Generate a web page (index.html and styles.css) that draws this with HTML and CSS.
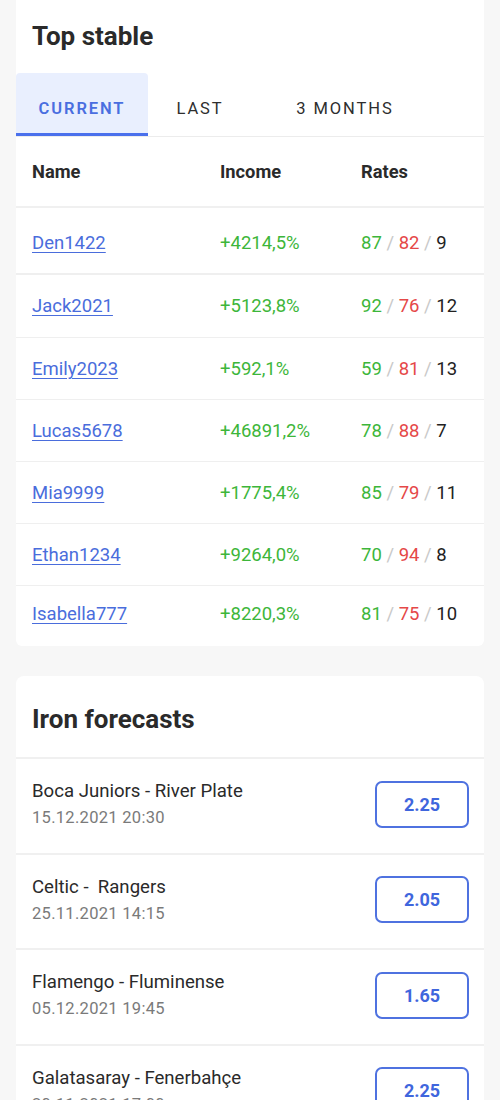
FILE: index.html
```html
<!DOCTYPE html>
<html>
<head>
<meta charset="utf-8">
<link rel="stylesheet" href="styles.css">
</head>
<body>
<div class="page">
  <section class="card card-top">
    <h2 class="card-title">Top stable</h2>
    <div class="tabs">
      <div class="tab tab-1 active">CURRENT</div>
      <div class="tab tab-2">LAST</div>
      <div class="tab tab-3">3 MONTHS</div>
    </div>
    <div class="table">
      <div class="row head"><span>Name</span><span>Income</span><span>Rates</span></div>
      <div class="row r1"><a href="#">Den1422</a><span class="inc">+4214,5%</span><span><i class="g">87</i> <i class="s">/</i> <i class="r">82</i> <i class="s">/</i> 9</span></div>
      <div class="row r2"><a href="#">Jack2021</a><span class="inc">+5123,8%</span><span><i class="g">92</i> <i class="s">/</i> <i class="r">76</i> <i class="s">/</i> 12</span></div>
      <div class="row"><a href="#">Emily2023</a><span class="inc">+592,1%</span><span><i class="g">59</i> <i class="s">/</i> <i class="r">81</i> <i class="s">/</i> 13</span></div>
      <div class="row"><a href="#">Lucas5678</a><span class="inc">+46891,2%</span><span><i class="g">78</i> <i class="s">/</i> <i class="r">88</i> <i class="s">/</i> 7</span></div>
      <div class="row"><a href="#">Mia9999</a><span class="inc">+1775,4%</span><span><i class="g">85</i> <i class="s">/</i> <i class="r">79</i> <i class="s">/</i> 11</span></div>
      <div class="row"><a href="#">Ethan1234</a><span class="inc">+9264,0%</span><span><i class="g">70</i> <i class="s">/</i> <i class="r">94</i> <i class="s">/</i> 8</span></div>
      <div class="row last"><a href="#">Isabella777</a><span class="inc">+8220,3%</span><span><i class="g">81</i> <i class="s">/</i> <i class="r">75</i> <i class="s">/</i> 10</span></div>
    </div>
  </section>

  <section class="card card-forecast">
    <h2 class="card-title">Iron forecasts</h2>
    <div class="fc">
      <div class="fc-info"><div class="fc-name">Boca Juniors - River Plate</div><div class="fc-date">15.12.2021 20:30</div></div>
      <button class="odd">2.25</button>
    </div>
    <div class="fc">
      <div class="fc-info"><div class="fc-name">Celtic -&nbsp; Rangers</div><div class="fc-date">25.11.2021 14:15</div></div>
      <button class="odd">2.05</button>
    </div>
    <div class="fc">
      <div class="fc-info"><div class="fc-name">Flamengo - Fluminense</div><div class="fc-date">05.12.2021 19:45</div></div>
      <button class="odd">1.65</button>
    </div>
    <div class="fc">
      <div class="fc-info"><div class="fc-name">Galatasaray - Fenerbahçe</div><div class="fc-date">20.11.2021 17:00</div></div>
      <button class="odd">2.25</button>
    </div>
  </section>
</div>
</body>
</html>
```

FILE: styles.css
```css
* { box-sizing: border-box; }
html, body { margin: 0; padding: 0; }
body {
  background: #f7f7f7;
  font-family: Roboto, "Noto Sans", Arial, sans-serif;
  color: #222;
  width: 500px;
  height: 1100px;
  overflow: hidden;
}
.page {
  padding: 0 16px;
  display: flex;
  flex-direction: column;
  gap: 30px;
}
.card {
  background: #fff;
  border-radius: 8px;
}
.card-top {
  border-radius: 0 0 6px 6px;
  padding-top: 20px;
}
.card-title {
  margin: 0;
  padding: 0 16px;
  font-size: 26px;
  line-height: 32px;
  font-weight: 700;
  color: #2a2a2a;
}
.tabs {
  margin-top: 21px;
  display: flex;
  height: 64px;
  border-bottom: 1px solid #ececec;
}
.tab {
  display: flex;
  align-items: center;
  justify-content: center;
  padding-top: 7px;
  font-size: 16.5px;
  font-weight: 400;
  letter-spacing: 1.9px;
  color: #2e2e2e;
}
.tab-1 { width: 132px; }
.tab-2 { width: 104px; }
.tab-3 { width: 186px; }
.tab.active {
  background: #e9effe;
  color: #4a6ee0;
  font-weight: 600;
  border-radius: 4px 4px 0 0;
  box-shadow: inset 0 -3px 0 #4a70ec;
}
.row {
  display: grid;
  grid-template-columns: 188px 141px 1fr;
  align-items: center;
  padding: 0 16px;
  height: 62px;
  border-bottom: 1px solid #efefef;
  font-size: 18.5px;
}
.row.head {
  height: 71px;
  font-weight: 700;
  font-size: 18.3px;
  color: #2a2a2a;
  border-bottom: 2px solid #f0f0f0;
}
.row.r1 { height: 67px; padding-top: 4px; border-bottom-width: 2px; }
.row.r2 { height: 63px; }
.row.last { height: 60px; border-bottom: none; padding-bottom: 4px; }
.row a {
  color: #4a6ddc;
  text-decoration: underline;
  text-underline-offset: 3px;
  text-decoration-thickness: 1px;
}
.inc { color: #3db63a; }
.row i { font-style: normal; }
.g { color: #3db63a; }
.r { color: #e54848; }
.s { color: #c9c9c9; }

.card-forecast {
  padding-top: 27px;
}
.card-forecast .card-title {
  padding-bottom: 22px;
  border-bottom: 2px solid #f0f0f0;
}
.fc {
  height: 95.5px;
  display: flex;
  align-items: center;
  justify-content: space-between;
  padding: 0 15px 0 16px;
  border-bottom: 2px solid #f0f0f0;
}
.fc-info { margin-top: -3px; }
.fc-name {
  font-size: 18.6px;
  line-height: 24px;
  color: #2a2a2a;
}
.fc-date {
  margin-top: 4px;
  font-size: 16.5px;
  line-height: 22px;
  color: #7a7a7a;
  letter-spacing: 0.3px;
}
.odd {
  width: 94px;
  height: 47px;
  margin-top: -3px;
  border: 2px solid #4f72e0;
  border-radius: 7px;
  background: #fff;
  color: #3f66dd;
  font-family: Roboto, Arial, sans-serif;
  font-size: 18px;
  font-weight: 700;
  padding: 0;
}
```
